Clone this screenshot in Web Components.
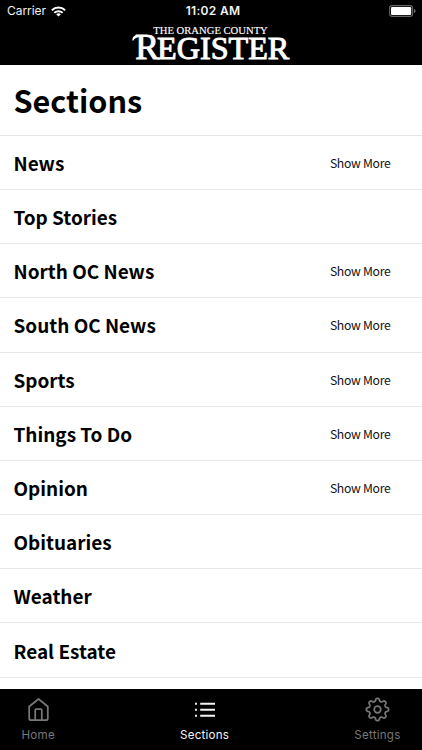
<!DOCTYPE html>
<html lang="en">
<head>
<meta charset="utf-8">
<title>Sections</title>
<style>
html,body{margin:0;height:750px;overflow:hidden;background:#fff}
</style>
</head>
<body>
<register-app></register-app>
<script>
const define=(name,html,setup)=>customElements.define(name,class extends HTMLElement{
  constructor(){super();this.attachShadow({mode:'open'}).innerHTML=html;}
  connectedCallback(){if(setup)setup(this,this.shadowRoot);}
});

define('status-bar',`
<style>
:host{display:grid;grid-template-columns:1fr auto 1fr;align-items:center;height:22px;padding:0 6px 0 7px;box-sizing:border-box;color:#f2f2f2;font:12px/22px Inter,sans-serif}
.left{display:flex;align-items:center;gap:5.5px}
.carrier{letter-spacing:-.05px}
.time{font-weight:600;letter-spacing:.3px;font-size:12px;padding-left:3px}
.battery{justify-self:end}
svg{display:block}
</style>
<div class="left"><span class="carrier">Carrier</span>
<svg width="15" height="11" viewBox="0 0 15 11" fill="none" stroke="#fff" stroke-width="2"><path d="M.9 4.3a9.4 9.4 0 0 1 13.2 0M3.3 6.9a6 6 0 0 1 8.4 0"/><path d="M7.5 10.6 5.1 8.3a3.5 3.5 0 0 1 4.8 0z" fill="#fff" stroke="none"/></svg></div>
<span class="time">11:02 AM</span>
<svg class="battery" width="27" height="12" viewBox="0 0 27 12"><rect x=".6" y=".6" width="23" height="10.8" rx="2.6" fill="none" stroke="#666" stroke-width="1.1"/><rect x="2" y="2" width="20.2" height="8" rx="1.2" fill="#fff"/><path d="M25 4q1.6 .5 1.6 2T25 8z" fill="#777"/></svg>`);

define('masthead-logo',`
<style>
:host{display:block;height:43px}
svg{display:block;margin:0 auto;overflow:visible}
text{fill:#fff;stroke:#fff;font-family:"Liberation Serif",serif}
</style>
<svg width="166" height="43" viewBox="128 22 166 43" role="img">
<text x="153.3" y="34" font-size="11.4" textLength="114.5" lengthAdjust="spacingAndGlyphs" stroke-width=".15">THE ORANGE COUNTY</text>
<text x="135.3" y="58.8" font-size="32" stroke-width="1" textLength="154" lengthAdjust="spacingAndGlyphs"><tspan font-size="35.5">R</tspan><tspan dx="-2">EGISTER</tspan></text>
<path d="M132.3 40.6Q132 35 138 35h8v1.9h-5q-6.200 0-7.500 3.700z" fill="#fff"/>
</svg>`);

define('section-row',`
<style>
:host{display:flex;align-items:center;justify-content:space-between;height:54.2px;box-sizing:border-box;border-bottom:1px solid #e8e8ea;padding:1px 31.5px 0 13.5px;font-family:"Noto Sans CJK JP","Noto Sans CJK SC",sans-serif}
.name{font-size:18.95px;line-height:30px;font-weight:700;color:#000}
.more{font-size:12.2px;line-height:20px;color:#111;letter-spacing:-.28px}
.more:empty{display:none}
</style>
<span class="name"><slot></slot></span><span class="more"></span>`,
(el,root)=>{root.querySelector('.more').textContent=el.hasAttribute('more')?'Show More':'';});

const gear=()=>{
  const points=[];
  for(let i=0;i<240;i++){
    const a=i/240*Math.PI*2,r=9.75+1.45*Math.tanh(1.7*Math.cos(8*a));
    points.push((12.5+r*Math.sin(a)).toFixed(2)+' '+(12.5-r*Math.cos(a)).toFixed(2));
  }
  return `<path d="M${points.join('L')}Z"/><circle cx="12.5" cy="12.5" r="3.3"/>`;
};
const icons={
  home:'<path d="M3.2 9.5 12.5 2l9.300 7.500v11.700q0 2-2 2H5.200q-2 0-2-2z"/><path d="M9.200 23V13.200q0-1 1-1h4.600q1 0 1 1V23"/>',
  list:'<path d="M8.200 6.700h14.800M8.200 12.700h14.800M8.200 18.700h14.800M3 6.700h1.900M3 12.700h1.900M3 18.700h1.900" stroke-width="2"/>',
  settings:gear()
};
define('tab-item',`
<style>
:host{display:flex;flex-direction:column;align-items:center;color:#777;font:11.6px/16px Inter,sans-serif;letter-spacing:.22px}
:host([active]){color:#f3f3f3}
svg{display:block;fill:none;stroke:currentColor;stroke-width:1.75;stroke-linejoin:round}
.label{margin-top:5px}
</style>
<svg width="25" height="25" viewBox="0 0 25 25"></svg><span class="label"><slot></slot></span>`,
(el,root)=>{root.querySelector('svg').innerHTML=icons[el.getAttribute('icon')];});

define('tab-bar',`
<style>
:host{display:flex;justify-content:space-between;height:61.5px;box-sizing:border-box;padding:8px 21.5px 0;background:#000;flex:none}
</style><slot></slot>`);

define('register-app',`
<style>
:host{display:flex;flex-direction:column;width:422px;height:750px;background:#fff;overflow:hidden}
header{height:65.4px;background:#000;flex:none}
main{flex:1;min-height:0;overflow:hidden}
h1{margin:0;height:70.4px;box-sizing:border-box;border-bottom:1px solid #e4e4e8;padding-left:13.5px;font:700 30.6px/70px "Noto Sans CJK JP","Noto Sans CJK SC",sans-serif;color:#000}
</style>
<header><status-bar></status-bar><masthead-logo></masthead-logo></header>
<main><h1>Sections</h1>
<section-row more>News</section-row>
<section-row>Top Stories</section-row>
<section-row more>North OC News</section-row>
<section-row more>South OC News</section-row>
<section-row more>Sports</section-row>
<section-row more>Things To Do</section-row>
<section-row more>Opinion</section-row>
<section-row>Obituaries</section-row>
<section-row>Weather</section-row>
<section-row>Real Estate</section-row>
</main>
<tab-bar><tab-item icon="home">Home</tab-item><tab-item icon="list" active>Sections</tab-item><tab-item icon="settings">Settings</tab-item></tab-bar>`);
</script>
</body>
</html>
